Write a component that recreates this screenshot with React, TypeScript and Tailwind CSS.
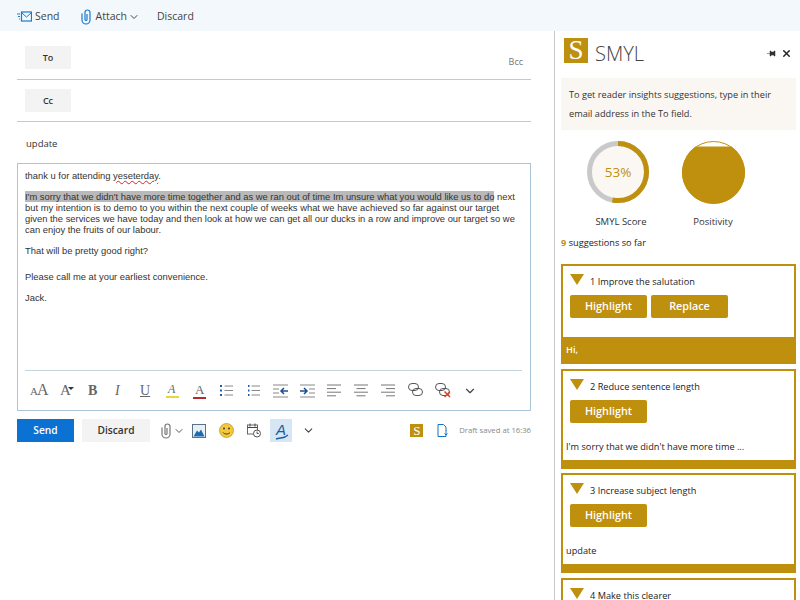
import { ChevronDown, X } from "lucide-react";

const gold = "#bf8f0e";

function Clip({ className }: { className?: string }) {
  return (
    <svg width="10" height="16" viewBox="0 0 10 16" fill="none" stroke="currentColor" strokeWidth="1.2" className={className}>
      <path d="M1 4.5V11a4 4 0 0 0 8 0V3.5a2.5 2.5 0 0 0-5 0V10.5a1 1 0 0 0 2 0V5" />
    </svg>
  );
}

function LinkIcon({ broken }: { broken?: boolean }) {
  return (
    <svg width="16" height="15" viewBox="0 0 16 15" fill="none" stroke="#555" strokeWidth="1">
      <rect x="0.5" y="0.5" width="10" height="7" rx="3.5" />
      <rect x="4.5" y="5.5" width="10" height="7" rx="3.5" />
      {broken && <path d="M9.5 8.5l5.5 5.5M15 8.5L9.5 14" stroke="#d8452c" strokeWidth="1.5" />}
    </svg>
  );
}

function ListIcon({ numbered }: { numbered?: boolean }) {
  return (
    <svg width="13" height="13" viewBox="0 0 13 13" fill="none">
      {[2, 6.5, 11].map((y) => (
        <g key={y}>
          <rect x={numbered ? 1 : 0} y={y - 1} width={numbered ? 1.5 : 2} height="2" fill="#1f5f9e" />
          <line x1="4.5" x2="13" y1={y} y2={y} stroke="#888" />
        </g>
      ))}
    </svg>
  );
}

function IndentIcon({ flip }: { flip?: boolean }) {
  return (
    <svg width="15" height="14" viewBox="0 0 15 14" fill="none">
      <line x1="0" x2="15" y1="1" y2="1" stroke="#888" />
      <line x1="0" x2="15" y1="13" y2="13" stroke="#888" />
      {flip ? (
        <>
          <path d="M0 7h7M4 4l3 3-3 3" stroke="#1b4f94" strokeWidth="1.5" />
          <line x1="9" x2="15" y1="5" y2="5" stroke="#888" />
          <line x1="9" x2="15" y1="9" y2="9" stroke="#888" />
        </>
      ) : (
        <>
          <path d="M15 7H8M11 4L8 7l3 3" stroke="#1b4f94" strokeWidth="1.5" />
          <line x1="0" x2="6" y1="5" y2="5" stroke="#888" />
          <line x1="0" x2="6" y1="9" y2="9" stroke="#888" />
        </>
      )}
    </svg>
  );
}

function AlignIcon({ mode }: { mode: "left" | "center" | "right" }) {
  const rows = [14, 9, 14, 9];
  return (
    <svg width="14" height="13" viewBox="0 0 14 13" fill="none">
      {rows.map((w, i) => {
        const x = mode === "left" ? 0 : mode === "center" ? (14 - w) / 2 : 14 - w;
        return <line key={i} x1={x} x2={x + w} y1={1 + i * 3.6} y2={1 + i * 3.6} stroke="#777" />;
      })}
    </svg>
  );
}

function FormatToolbar() {
  return (
    <div className="flex items-center h-[39px] pl-[5px] text-[#666] font-['Liberation_Serif',serif]">
      <span className="w-[28px] flex items-baseline">
        <span className="text-[11px]">A</span>
        <span className="text-[16px] -ml-px">A</span>
      </span>
      <span className="w-[28px] text-[15px] pl-[2px] relative">
        A
        <span className="absolute left-[10px] top-[2px] w-0 h-0 border-x-[3px] border-x-transparent border-t-[3px] border-t-[#333]" />
      </span>
      <span className="w-[26px] pl-[2px] text-[14px] font-bold">B</span>
      <span className="w-[26px] pl-[3px] text-[14px] italic">I</span>
      <span className="w-[26px] pl-[2px] text-[14px] underline">U</span>
      <span className="w-[27px] pl-[2px] flex flex-col items-start leading-none">
        <span className="text-[12px] italic pl-[2px]">A</span>
        <span className="w-[13px] h-[2px] bg-[#e8d640] mt-[1px]" />
      </span>
      <span className="w-[27px] pl-[2px] flex flex-col items-start leading-none">
        <span className="text-[13px] pl-[2px]">A</span>
        <span className="w-[13px] h-[2px] bg-[#b52a2a] mt-[1px]" />
      </span>
      <span className="w-[27px] pl-[2px]"><ListIcon /></span>
      <span className="w-[26px] pl-[2px]"><ListIcon numbered /></span>
      <span className="w-[27px] pl-[2px]"><IndentIcon /></span>
      <span className="w-[27px] pl-[2px]"><IndentIcon flip /></span>
      <span className="w-[27px] pl-[2px]"><AlignIcon mode="left" /></span>
      <span className="w-[27px] pl-[2px]"><AlignIcon mode="center" /></span>
      <span className="w-[27px] pl-[2px]"><AlignIcon mode="right" /></span>
      <span className="w-[27px] pl-[2px]"><LinkIcon /></span>
      <span className="w-[27px] pl-[2px]"><LinkIcon broken /></span>
      <span className="pl-[3px]"><ChevronDown size={14} strokeWidth={2} className="text-[#444]" /></span>
    </div>
  );
}

function Card({ n, title, replace, text, band, gap }: { n: number; title: string; replace?: boolean; text?: string; band?: boolean; gap: string }) {
  return (
    <div className={`h-[100px] shrink-0 border-2 border-[#bf8f0e] flex flex-col ${gap}`}>
      <div className="flex items-start pl-[7px] pt-[8px] h-[29px]">
        <span className="w-0 h-0 border-x-[7px] border-x-transparent border-t-[11px] border-t-[#bf8f0e]" />
        <span className="ml-[6px] mt-[1px] text-[9.2px] leading-[14px] text-[#222]">{n} {title}</span>
      </div>
      <div className="flex gap-[4px] pl-[7px]">
        <button className="w-[77px] h-[23px] rounded-[2px] bg-[#bf8f0e] text-white text-[10.8px] font-semibold">Highlight</button>
        {replace && <button className="w-[77px] h-[23px] rounded-[2px] bg-[#bf8f0e] text-white text-[10.8px] font-semibold">Replace</button>}
      </div>
      <div className="flex-1" />
      {text && <div className="pl-[3px] pb-[6px] text-[9.2px] leading-[14px] text-[#222]">{text}</div>}
      {band ? (
        <div className="h-[25px] bg-[#bf8f0e] pl-[3px] text-[9.2px] font-semibold text-white leading-[25px]">Hi,</div>
      ) : (
        <div className="h-[7px] bg-[#bf8f0e]" />
      )}
    </div>
  );
}

export default function App() {
  return (
    <div className="w-[800px] h-[600px] overflow-hidden bg-white flex flex-col font-['Open_Sans',sans-serif] text-[#333]">
      {/* Top bar */}
      <header className="h-[31px] shrink-0 bg-[#f3f8fc] flex items-center pl-[17px] pt-[2px] text-[10.5px] text-[#444]">
        <svg width="15" height="11" viewBox="0 0 15 11" fill="none">
          <rect x="4.5" y="1" width="10" height="9" stroke="#1a7ad0" strokeWidth="1.2" />
          <path d="M5 2l4.5 4L14 2" stroke="#1a7ad0" />
          <path d="M0 3h3M1 5.5h2M2 8h1" stroke="#1a7ad0" />
        </svg>
        <span className="ml-[3px]">Send</span>
        <Clip className="ml-[21px] text-[#1a7ad0]" />
        <span className="ml-[5px]">Attach</span>
        <ChevronDown size={12} className="ml-[1px]" />
        <span className="ml-[17px]">Discard</span>
      </header>

      <div className="flex-1 flex min-h-0">
        {/* Compose */}
        <main className="w-[554px] shrink-0 pl-[17px] pr-[23px]">
          <div className="h-[49px] pt-[15px] border-b border-[#c8c8c8] flex items-start justify-between pl-[8px]">
            <span className="w-[46px] h-[23px] bg-[#f3f3f3] text-[9px] font-semibold flex items-center justify-center">To</span>
            <span className="text-[9px] text-[#777] mt-[9px] mr-[8px]">Bcc</span>
          </div>
          <div className="h-[42px] pt-[9px] border-b border-[#c8c8c8] pl-[8px]">
            <span className="w-[46px] h-[23px] bg-[#f3f3f3] text-[9px] font-semibold flex items-center justify-center">Cc</span>
          </div>
          <div className="h-[41px] pl-[9px] pt-[15px] text-[9.5px] leading-[14px]">update</div>

          {/* Editor */}
          <div className="h-[248px] border border-[#aac7d9] flex flex-col pl-[7px] pr-[8px] pt-[6px] font-['Liberation_Sans',sans-serif] text-[9.4px] leading-[11px] text-[#333]">
            <p className="h-[21px]">
              thank u for attending <span className="underline decoration-wavy decoration-[#d22] decoration-1">yeseterday</span>.
            </p>
            <p className="h-[54px] whitespace-nowrap">
              <span className="bg-[#b9b9b9]">I'm sorry that we didn't have more time together and as we ran out of time Im unsure what you would like us to do</span> next<br />
              but my intention is to demo to you within the next couple of weeks what we have achieved so far against our target<br />
              given the services we have today and then look at how we can get all our ducks in a row and improve our target so we<br />
              can enjoy the fruits of our labour.
            </p>
            <p className="h-[26px]">That will be pretty good right?</p>
            <p className="h-[21px]">Please call me at your earliest convenience.</p>
            <p className="h-[11px]">Jack.</p>
            <div className="flex-1" />
            <div className="border-t border-[#c5d3dc]">
              <FormatToolbar />
            </div>
          </div>

          {/* Actions */}
          <div className="h-[31px] mt-[8px] flex items-start">
            <button className="w-[57px] h-[23px] bg-[#0b72d4] text-white text-[10.2px] font-semibold">Send</button>
            <button className="w-[68px] h-[23px] ml-[8px] bg-[#f3f3f3] text-[10.2px] font-semibold text-[#333]">Discard</button>
            <Clip className="ml-[11px] mt-[4px] text-[#777]" />
            <ChevronDown size={12} className="ml-[2px] mt-[6px] text-[#555]" />
            <svg width="14" height="14" viewBox="0 0 14 14" className="ml-[7px] mt-[5px]" fill="none">
              <rect x="0.5" y="0.5" width="13" height="13" stroke="#5a7288" fill="#e8eff5" />
              <path d="M1.5 12.5l3.5-6 2 2 2-3 3.5 7z" fill="#1d6ab0" />
            </svg>
            <svg width="15" height="15" viewBox="0 0 15 15" className="ml-[13px] mt-[4px]">
              <circle cx="7.5" cy="7.5" r="7" fill="#f3c93b" stroke="#b98e1c" strokeWidth="0.7" />
              <circle cx="5" cy="5.5" r="0.9" fill="#333" />
              <circle cx="10" cy="5.5" r="0.9" fill="#333" />
              <path d="M4 9.5c1.5 2 5.5 2 7 0" stroke="#333" fill="none" />
            </svg>
            <svg width="14" height="15" viewBox="0 0 14 15" className="ml-[13px] mt-[4px]" fill="none">
              <rect x="0.5" y="2" width="10" height="9" stroke="#666" />
              <path d="M0.5 4.5h10M3 0.5v3M8 0.5v3" stroke="#444" />
              <circle cx="10" cy="10.5" r="3.5" fill="#fff" stroke="#555" />
              <path d="M10 8.5v2h1.8" stroke="#555" />
            </svg>
            <span className="w-[22px] h-[23px] ml-[9px] bg-[#d6e6f4] flex items-center justify-center relative font-['Liberation_Sans',sans-serif] italic text-[15px] text-[#1b5e9e]">
              A
              <svg width="14" height="6" viewBox="0 0 14 6" className="absolute left-[5px] bottom-[2px]" fill="none">
                <path d="M1 5c3-1 7-1 9-2l3-2" stroke="#1b5e9e" strokeWidth="1.4" />
              </svg>
            </span>
            <ChevronDown size={13} strokeWidth={2} className="ml-[10px] mt-[5px] text-[#444]" />
            <div className="flex-1" />
            <span className="w-[13px] h-[13px] mt-[5px] bg-[#bf8f0e] text-white text-[13px] leading-[13px] text-center font-['Liberation_Serif',serif]">S</span>
            <svg width="11" height="13" viewBox="0 0 11 13" className="ml-[14px] mt-[5px]" fill="none">
              <path d="M9 7V3L6.5.5H1v12h8v-2" stroke="#1a6fbd" />
              <path d="M9 6.5v4M7.5 9.5L9 11l1.5-1.5" stroke="#1a6fbd" />
            </svg>
            <span className="ml-[11px] mt-[4px] text-[7.7px] leading-[14px] text-[#888]">Draft saved at 16:36</span>
          </div>
        </main>

        {/* SMYL panel */}
        <aside className="flex-1 min-w-0 border-l border-[#c8c8c8] pl-[6px] pr-[4px] overflow-hidden">
          <div className="h-[47px] flex items-start pt-[7px] pl-[3px]">
            <span className="w-[24px] h-[25px] bg-[#bf8f0e] text-white text-[27px] leading-[25px] text-center font-['Liberation_Serif',serif]">S</span>
            <span className="ml-[7px] mt-[2px] text-[20px] leading-[27px] font-light text-[#444]">SMYL</span>
            <div className="flex-1" />
            <svg width="9" height="7" viewBox="0 0 9 7" className="mt-[12px]">
              <path d="M0 3.5h3M3 1h1v5H3zM4 2h3v3H4zM7 1h1v5H7z" fill="#333" stroke="#333" strokeWidth="0.5" />
            </svg>
            <X size={11} strokeWidth={3} className="ml-[5px] mr-[4px] mt-[10px] text-[#222]" />
          </div>
          <div className="h-[52px] bg-[#faf7f2] pl-[8px] pt-[7px] text-[9.2px] leading-[19px] text-[#333]">
            To get reader insights suggestions, type in their<br />email address in the To field.
          </div>

          <div className="flex h-[107px] pt-[11px]">
            <div className="w-[120px] flex flex-col items-center">
              <svg width="62" height="62" viewBox="0 0 62 62" className="-ml-[6px] shrink-0">
                <circle cx="31" cy="31" r="28.5" fill="#fbf8f3" stroke="#c9c9c9" strokeWidth="5" />
                <circle cx="31" cy="31" r="28.5" fill="none" stroke="#bf8f0e" strokeWidth="5" strokeDasharray="95 180" transform="rotate(-90 31 31)" />
                <text x="31" y="36" textAnchor="middle" fontSize="13.5" fill="#bf8f0e" fontFamily="Open Sans">53%</text>
              </svg>
              <span className="mt-[12px] text-[9.5px] leading-[14px] text-[#333]">SMYL Score</span>
            </div>
            <div className="w-[70px] -ml-[3px] flex flex-col items-center">
              <svg width="63" height="63" viewBox="0 0 63 63" className="shrink-0">
                <circle cx="31.5" cy="31.5" r="31" fill="#fff" stroke="#bf8f0e" />
                <path d="M13.5 5.5 A31.5 31.5 0 1 0 49.5 5.5 Z" fill="#bf8f0e" />
              </svg>
              <span className="mt-[11px] text-[9.5px] leading-[14px] text-[#333]">Positivity</span>
            </div>
          </div>

          <div className="h-[28px] text-[9.2px] leading-[14px] text-[#222] -mt-[1px]">
            <span className="font-bold" style={{ color: gold }}>9</span> suggestions so far
          </div>

          <div className="flex flex-col">
            <Card n={1} title="Improve the salutation" replace band gap="mb-[5px]" />
            <Card n={2} title="Reduce sentence length" text="I'm sorry that we didn't have more time ..." gap="mb-[4px]" />
            <Card n={3} title="Increase subject length" text="update" gap="mb-[5px]" />
            <Card n={4} title="Make this clearer" gap="mb-0" />
          </div>
        </aside>
      </div>
    </div>
  );
}
